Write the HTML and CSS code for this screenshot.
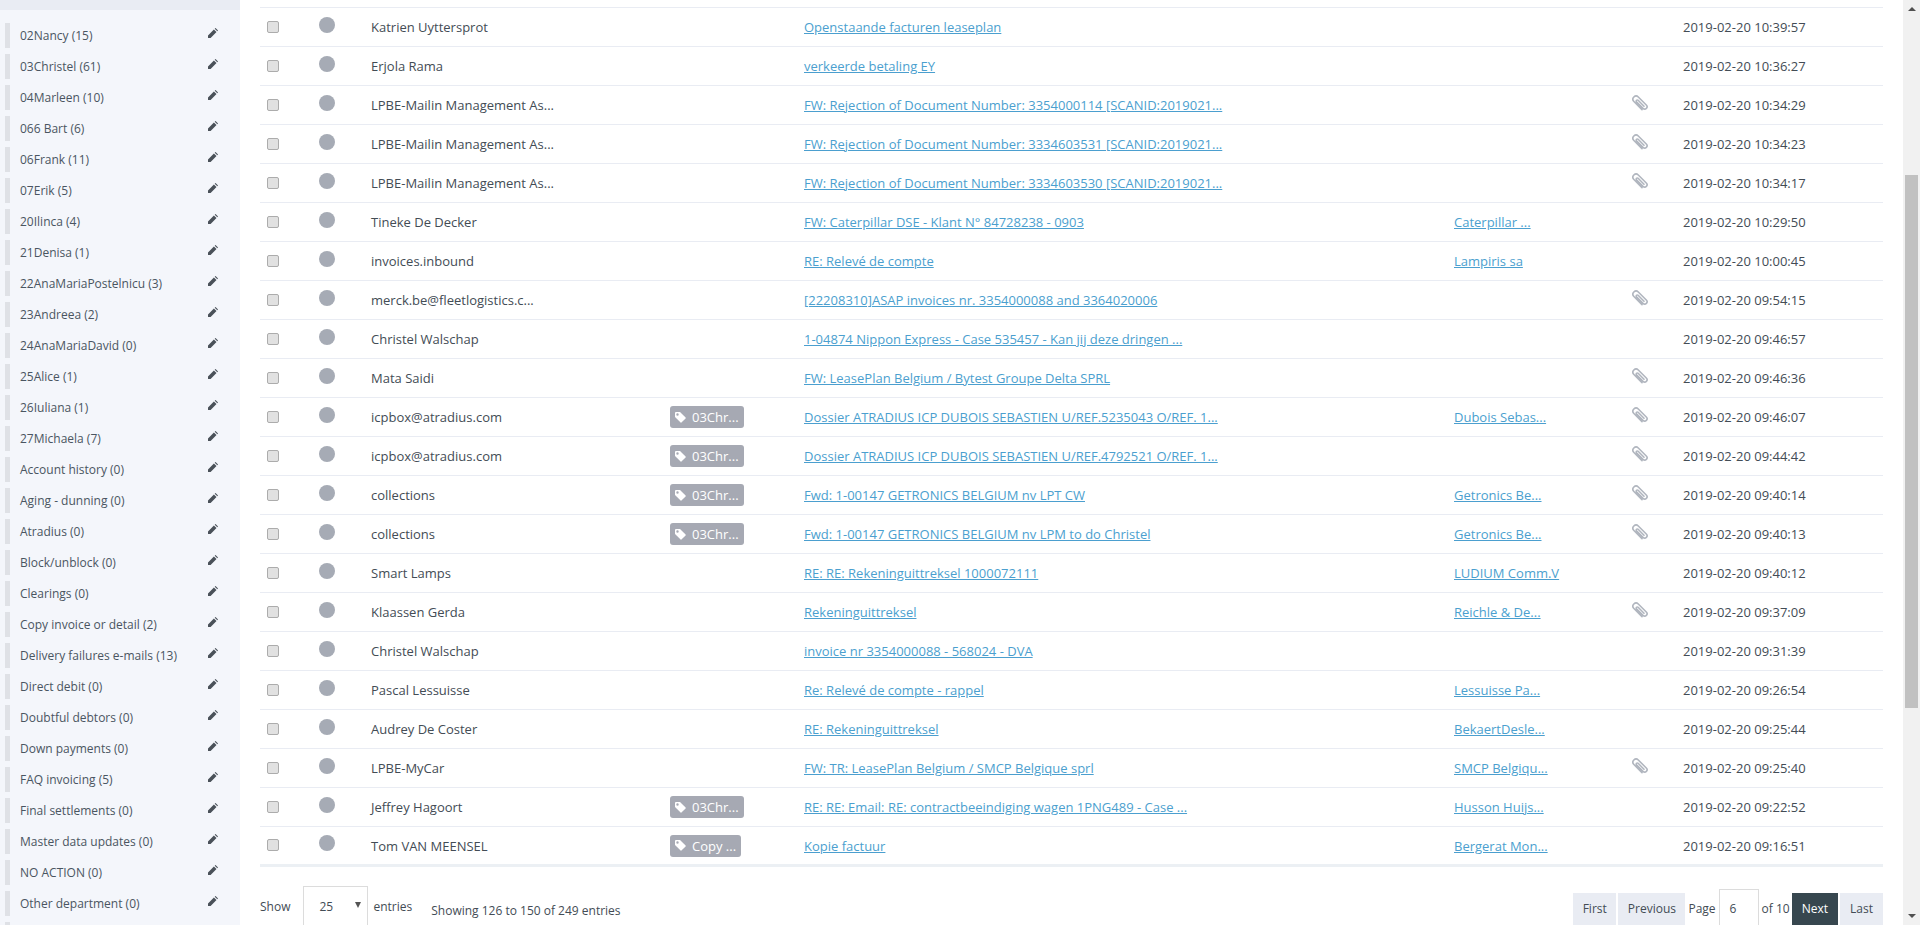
FILE: index.html
```html
<!DOCTYPE html>
<html lang="en">
<head>
  <meta charset="UTF-8" />
  <title>Mailbox</title>
  <link rel="stylesheet" href="styles.css">
</head>
<body>
  <svg class="defs" width="0" height="0">
    <symbol id="pencil" viewBox="0 0 10 10"><path d="M0 10V7.4L5.9 1.5L8.5 4.1L2.6 10ZM6.7.7L7.2.2Q7.5 0 7.8.2L9.8 2.2Q10 2.5 9.8 2.8L9.3 3.3Z"/></symbol>
    <symbol id="clip" viewBox="0 0 16 16"><path fill="none" stroke="currentColor" stroke-width="1.6" stroke-linecap="round" d="M10 14.600L1.900 6.500A3 3 0 0 1 6.300 2L14.300 10A2.300 2.300 0 0 1 11 13.400L4.500 6.900A1.100 1.100 0 0 1 6.100 5.300L12 11.200"/></symbol>
    <symbol id="tag" viewBox="0 0 11 11"><path fill-rule="evenodd" d="M0 1Q0 0 1 0H5L10.600 5.600Q11 6 10.600 6.400L6.400 10.600Q6 11 5.600 10.600L0 5ZM2.500 1.300A1.200 1.200 0 1 0 2.500 3.700A1.200 1.200 0 1 0 2.500 1.300Z"/></symbol>
  </svg>

  <div class="page">
    <!-- SIDEBAR -->
    <aside class="sidebar">
      <ul class="folders">
        <li><span>02Nancy (15)</span><svg class="pencil"><use href="#pencil"/></svg></li>
        <li><span>03Christel (61)</span><svg class="pencil"><use href="#pencil"/></svg></li>
        <li><span>04Marleen (10)</span><svg class="pencil"><use href="#pencil"/></svg></li>
        <li><span>066 Bart (6)</span><svg class="pencil"><use href="#pencil"/></svg></li>
        <li><span>06Frank (11)</span><svg class="pencil"><use href="#pencil"/></svg></li>
        <li><span>07Erik (5)</span><svg class="pencil"><use href="#pencil"/></svg></li>
        <li><span>20Ilinca (4)</span><svg class="pencil"><use href="#pencil"/></svg></li>
        <li><span>21Denisa (1)</span><svg class="pencil"><use href="#pencil"/></svg></li>
        <li><span>22AnaMariaPostelnicu (3)</span><svg class="pencil"><use href="#pencil"/></svg></li>
        <li><span>23Andreea (2)</span><svg class="pencil"><use href="#pencil"/></svg></li>
        <li><span>24AnaMariaDavid (0)</span><svg class="pencil"><use href="#pencil"/></svg></li>
        <li><span>25Alice (1)</span><svg class="pencil"><use href="#pencil"/></svg></li>
        <li><span>26Iuliana (1)</span><svg class="pencil"><use href="#pencil"/></svg></li>
        <li><span>27Michaela (7)</span><svg class="pencil"><use href="#pencil"/></svg></li>
        <li><span>Account history (0)</span><svg class="pencil"><use href="#pencil"/></svg></li>
        <li><span>Aging - dunning (0)</span><svg class="pencil"><use href="#pencil"/></svg></li>
        <li><span>Atradius (0)</span><svg class="pencil"><use href="#pencil"/></svg></li>
        <li><span>Block/unblock (0)</span><svg class="pencil"><use href="#pencil"/></svg></li>
        <li><span>Clearings (0)</span><svg class="pencil"><use href="#pencil"/></svg></li>
        <li><span>Copy invoice or detail (2)</span><svg class="pencil"><use href="#pencil"/></svg></li>
        <li><span>Delivery failures e-mails (13)</span><svg class="pencil"><use href="#pencil"/></svg></li>
        <li><span>Direct debit (0)</span><svg class="pencil"><use href="#pencil"/></svg></li>
        <li><span>Doubtful debtors (0)</span><svg class="pencil"><use href="#pencil"/></svg></li>
        <li><span>Down payments (0)</span><svg class="pencil"><use href="#pencil"/></svg></li>
        <li><span>FAQ invoicing (5)</span><svg class="pencil"><use href="#pencil"/></svg></li>
        <li><span>Final settlements (0)</span><svg class="pencil"><use href="#pencil"/></svg></li>
        <li><span>Master data updates (0)</span><svg class="pencil"><use href="#pencil"/></svg></li>
        <li><span>NO ACTION (0)</span><svg class="pencil"><use href="#pencil"/></svg></li>
        <li><span>Other department (0)</span><svg class="pencil"><use href="#pencil"/></svg></li>
        <li></li>
      </ul>
    </aside>

    <!-- MAIL LIST -->
    <main class="content">
      <table class="mails">
        <colgroup>
          <col class="c-check"><col class="c-dot"><col class="c-from"><col class="c-label"><col class="c-subject"><col class="c-company"><col class="c-clip"><col class="c-date">
        </colgroup>
        <tbody>
          <tr><td><span class="check"></span></td><td><span class="dot"></span></td><td>Katrien Uyttersprot</td><td></td><td><a href="#">Openstaande facturen leaseplan</a></td><td></td><td></td><td>2019-02-20 10:39:57</td></tr>
          <tr><td><span class="check"></span></td><td><span class="dot"></span></td><td>Erjola Rama</td><td></td><td><a href="#">verkeerde betaling EY</a></td><td></td><td></td><td>2019-02-20 10:36:27</td></tr>
          <tr><td><span class="check"></span></td><td><span class="dot"></span></td><td>LPBE-Mailin Management As...</td><td></td><td><a href="#">FW: Rejection of Document Number: 3354000114 [SCANID:2019021...</a></td><td></td><td><svg class="clip"><use href="#clip"/></svg></td><td>2019-02-20 10:34:29</td></tr>
          <tr><td><span class="check"></span></td><td><span class="dot"></span></td><td>LPBE-Mailin Management As...</td><td></td><td><a href="#">FW: Rejection of Document Number: 3334603531 [SCANID:2019021...</a></td><td></td><td><svg class="clip"><use href="#clip"/></svg></td><td>2019-02-20 10:34:23</td></tr>
          <tr><td><span class="check"></span></td><td><span class="dot"></span></td><td>LPBE-Mailin Management As...</td><td></td><td><a href="#">FW: Rejection of Document Number: 3334603530 [SCANID:2019021...</a></td><td></td><td><svg class="clip"><use href="#clip"/></svg></td><td>2019-02-20 10:34:17</td></tr>
          <tr><td><span class="check"></span></td><td><span class="dot"></span></td><td>Tineke De Decker</td><td></td><td><a href="#">FW: Caterpillar DSE - Klant N° 84728238 - 0903</a></td><td><a href="#">Caterpillar ...</a></td><td></td><td>2019-02-20 10:29:50</td></tr>
          <tr><td><span class="check"></span></td><td><span class="dot"></span></td><td>invoices.inbound</td><td></td><td><a href="#">RE: Relevé de compte</a></td><td><a href="#">Lampiris sa</a></td><td></td><td>2019-02-20 10:00:45</td></tr>
          <tr><td><span class="check"></span></td><td><span class="dot"></span></td><td>merck.be@fleetlogistics.c...</td><td></td><td><a href="#">[22208310]ASAP invoices nr. 3354000088 and 3364020006</a></td><td></td><td><svg class="clip"><use href="#clip"/></svg></td><td>2019-02-20 09:54:15</td></tr>
          <tr><td><span class="check"></span></td><td><span class="dot"></span></td><td>Christel Walschap</td><td></td><td><a href="#">1-04874 Nippon Express - Case 535457 - Kan jij deze dringen ...</a></td><td></td><td></td><td>2019-02-20 09:46:57</td></tr>
          <tr><td><span class="check"></span></td><td><span class="dot"></span></td><td>Mata Saidi</td><td></td><td><a href="#">FW: LeasePlan Belgium / Bytest Groupe Delta SPRL</a></td><td></td><td><svg class="clip"><use href="#clip"/></svg></td><td>2019-02-20 09:46:36</td></tr>
          <tr><td><span class="check"></span></td><td><span class="dot"></span></td><td>icpbox@atradius.com</td><td><span class="badge"><svg class="tag"><use href="#tag"/></svg>03Chr...</span></td><td><a href="#">Dossier ATRADIUS ICP DUBOIS SEBASTIEN U/REF.5235043 O/REF. 1...</a></td><td><a href="#">Dubois Sebas...</a></td><td><svg class="clip"><use href="#clip"/></svg></td><td>2019-02-20 09:46:07</td></tr>
          <tr><td><span class="check"></span></td><td><span class="dot"></span></td><td>icpbox@atradius.com</td><td><span class="badge"><svg class="tag"><use href="#tag"/></svg>03Chr...</span></td><td><a href="#">Dossier ATRADIUS ICP DUBOIS SEBASTIEN U/REF.4792521 O/REF. 1...</a></td><td></td><td><svg class="clip"><use href="#clip"/></svg></td><td>2019-02-20 09:44:42</td></tr>
          <tr><td><span class="check"></span></td><td><span class="dot"></span></td><td>collections</td><td><span class="badge"><svg class="tag"><use href="#tag"/></svg>03Chr...</span></td><td><a href="#">Fwd: 1-00147 GETRONICS BELGIUM nv LPT CW</a></td><td><a href="#">Getronics Be...</a></td><td><svg class="clip"><use href="#clip"/></svg></td><td>2019-02-20 09:40:14</td></tr>
          <tr><td><span class="check"></span></td><td><span class="dot"></span></td><td>collections</td><td><span class="badge"><svg class="tag"><use href="#tag"/></svg>03Chr...</span></td><td><a href="#">Fwd: 1-00147 GETRONICS BELGIUM nv LPM to do Christel</a></td><td><a href="#">Getronics Be...</a></td><td><svg class="clip"><use href="#clip"/></svg></td><td>2019-02-20 09:40:13</td></tr>
          <tr><td><span class="check"></span></td><td><span class="dot"></span></td><td>Smart Lamps</td><td></td><td><a href="#">RE: RE: Rekeninguittreksel 1000072111</a></td><td><a href="#">LUDIUM Comm.V</a></td><td></td><td>2019-02-20 09:40:12</td></tr>
          <tr><td><span class="check"></span></td><td><span class="dot"></span></td><td>Klaassen Gerda</td><td></td><td><a href="#">Rekeninguittreksel</a></td><td><a href="#">Reichle &amp; De...</a></td><td><svg class="clip"><use href="#clip"/></svg></td><td>2019-02-20 09:37:09</td></tr>
          <tr><td><span class="check"></span></td><td><span class="dot"></span></td><td>Christel Walschap</td><td></td><td><a href="#">invoice nr 3354000088 - 568024 - DVA</a></td><td></td><td></td><td>2019-02-20 09:31:39</td></tr>
          <tr><td><span class="check"></span></td><td><span class="dot"></span></td><td>Pascal Lessuisse</td><td></td><td><a href="#">Re: Relevé de compte - rappel</a></td><td><a href="#">Lessuisse Pa...</a></td><td></td><td>2019-02-20 09:26:54</td></tr>
          <tr><td><span class="check"></span></td><td><span class="dot"></span></td><td>Audrey De Coster</td><td></td><td><a href="#">RE: Rekeninguittreksel</a></td><td><a href="#">BekaertDesle...</a></td><td></td><td>2019-02-20 09:25:44</td></tr>
          <tr><td><span class="check"></span></td><td><span class="dot"></span></td><td>LPBE-MyCar</td><td></td><td><a href="#">FW: TR: LeasePlan Belgium / SMCP Belgique sprl</a></td><td><a href="#">SMCP Belgiqu...</a></td><td><svg class="clip"><use href="#clip"/></svg></td><td>2019-02-20 09:25:40</td></tr>
          <tr><td><span class="check"></span></td><td><span class="dot"></span></td><td>Jeffrey Hagoort</td><td><span class="badge"><svg class="tag"><use href="#tag"/></svg>03Chr...</span></td><td><a href="#">RE: RE: Email: RE: contractbeeindiging wagen 1PNG489 - Case ...</a></td><td><a href="#">Husson Huijs...</a></td><td></td><td>2019-02-20 09:22:52</td></tr>
          <tr><td><span class="check"></span></td><td><span class="dot"></span></td><td>Tom VAN MEENSEL</td><td><span class="badge"><svg class="tag"><use href="#tag"/></svg>Copy ...</span></td><td><a href="#">Kopie factuur</a></td><td><a href="#">Bergerat Mon...</a></td><td></td><td>2019-02-20 09:16:51</td></tr>
        </tbody>
      </table>

      <div class="table-footer">
        <div class="length">Show <span class="select">25<i class="caret"></i></span> entries</div>
        <div class="info">Showing 126 to 150 of 249 entries</div>
        <div class="paging">
          <a class="btn">First</a>
          <a class="btn">Previous</a>
          <span class="page-label">Page</span>
          <span class="page-input">6</span>
          <span class="page-of">of 10</span>
          <a class="btn current">Next</a>
          <a class="btn">Last</a>
        </div>
      </div>
    </main>

    <!-- SCROLLBAR -->
    <div class="scrollbar">
      <i class="arrow up"></i>
      <div class="thumb"></div>
      <i class="arrow down"></i>
    </div>
  </div>
</body>
</html>
```
FILE: styles.css
```css
* {
  box-sizing: border-box;
}
html, body {
  margin: 0;
  height: 100%;
  overflow: hidden;
}
body {
  font-family: "Open Sans", sans-serif;
  font-size: 13px;
  color: #434c55;
  background: #fff;
}
.defs {
  position: absolute;
}
.page {
  display: flex;
  height: 925px;
  overflow: hidden;
}

/* sidebar */
.sidebar {
  flex: 0 0 240px;
  background: #f4f6fb;
  border-top: 10px solid #e9ecf3;
  overflow: hidden;
  font-size: 12px;
  color: #4a5561;
}
.folders {
  list-style: none;
  margin: 0;
  padding: 13px 0 0 5px;
}
.folders li {
  display: flex;
  justify-content: space-between;
  height: 25px;
  margin-bottom: 6px;
  padding: 0 22px 0 10px;
  border-left: 5px solid #dfe1e6;
  line-height: 26px;
  white-space: nowrap;
}
.pencil {
  width: 10px;
  height: 10px;
  margin-top: 5px;
  fill: #4a5159;
}

/* table */
.content {
  flex: 1;
  padding: 7px 20px 0;
  min-width: 0;
}
.mails {
  width: 1623px;
  table-layout: fixed;
  border-collapse: collapse;
  border-top: 1px solid #e9ecf3;
  border-bottom: 3px solid #ecf0f4;
}
.c-check { width: 59px; }
.c-dot { width: 52px; }
.c-from { width: 299px; }
.c-label { width: 134px; }
.c-subject { width: 650px; }
.c-company { width: 178px; }
.c-clip { width: 51px; }
.c-date { width: 200px; }
.mails tr {
  height: 39px;
  border-bottom: 1px solid #e9ecf3;
}
.mails tr:last-child {
  border-bottom: 0;
}
.mails td {
  padding: 0;
  vertical-align: middle;
  white-space: nowrap;
}
.mails a {
  color: #4b9fcf;
  text-decoration: underline;
}
.check {
  display: block;
  width: 12px;
  height: 12px;
  margin: -1px 0 0 7px;
  background: #e1e1e1;
  border: 1px solid #acacac;
  border-radius: 2px;
}
.dot {
  display: block;
  width: 16px;
  height: 16px;
  margin-top: -5px;
  background: #a6abb5;
  border-radius: 50%;
}
.badge {
  display: inline-flex;
  align-items: center;
  height: 22px;
  padding: 0 5px 0 5px;
  background: #a6a9b3;
  border-radius: 3px;
  color: #fff;
  vertical-align: middle;
}
.tag {
  width: 11px;
  height: 11px;
  margin-right: 6px;
  fill: #fff;
}
.clip {
  display: block;
  width: 16px;
  height: 16px;
  margin-top: -5px;
  color: #b1b6bf;
}

/* footer of the table */
.table-footer {
  display: flex;
  align-items: flex-start;
  font-size: 12px;
}
.length {
  display: flex;
  align-items: flex-start;
  margin-top: 19px;
  line-height: 42px;
}
.select {
  position: relative;
  width: 65px;
  height: 44px;
  margin: 0 5px 0 13px;
  padding-left: 15px;
  border: 1px solid #dcdcdc;
  line-height: 40px;
}
.caret {
  position: absolute;
  top: 15px;
  right: 6px;
  border-style: solid;
  border-color: #555 transparent transparent;
  border-width: 6px 3px 0;
}
.info {
  margin: 35px 0 0 19px;
  line-height: 18px;
}
.paging {
  display: flex;
  align-items: flex-start;
  margin: 26px 0 0 auto;
  line-height: 32px;
}
.btn {
  height: 36px;
  padding: 0 10px;
  background: #e9ecf3;
  margin-left: 2px;
}
.btn:nth-child(-n+2) {
  padding: 0 9.5px;
}
.btn.current {
  background: #37474f;
  color: #fff;
}
.page-label {
  margin-left: 3px;
}
.page-input {
  width: 40px;
  height: 44px;
  margin: -4px 0 0 3px;
  padding-left: 10px;
  border: 1px solid #dcdcdc;
  line-height: 38px;
}
.page-of {
  margin-left: 3px;
}

/* fake window scrollbar */
.scrollbar {
  position: relative;
  flex: 0 0 17px;
  background: #f1f1f1;
}
.thumb {
  position: absolute;
  top: 175px;
  left: 2px;
  width: 13px;
  height: 533px;
  background: #c1c1c1;
}
.arrow {
  position: absolute;
  left: 5px;
  border: 4px solid transparent;
}
.arrow.up {
  top: 7px;
  border-top: 0;
  border-bottom: 4px solid #505050;
}
.arrow.down {
  bottom: 7px;
  border-bottom: 0;
  border-top: 4px solid #505050;
}
```
